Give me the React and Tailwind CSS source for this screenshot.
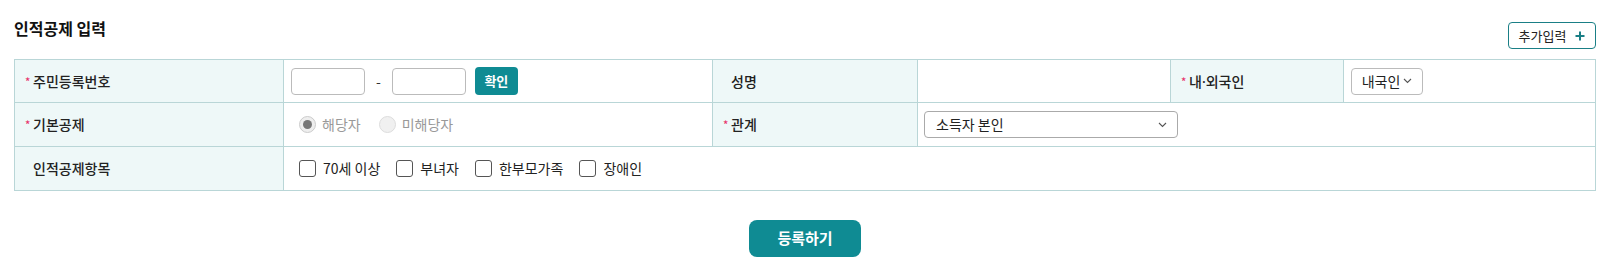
import React, { useState } from 'react'

const font = { fontFamily: '"Noto Sans CJK KR", "Noto Sans", sans-serif' }

function Label ({ children, required }) {
  return (
    <th className="border border-[#b9d6d7] bg-[#eef8f8] px-[10px] text-left text-[14px] font-medium text-[#222]">
      <span className="flex items-center">
        {required ? <span className="mr-[1px] w-[7px] text-[11px] text-[#e8336b]">*</span> : <span className="mr-[1px] w-[7px]" />}
        <span>{children}</span>
      </span>
    </th>
  )
}

function Chevron ({ className }) {
  return (
    <svg className={className} width="9" height="6" viewBox="0 0 9 6" fill="none">
      <path d="M1 1l3.5 3.5L8 1" stroke="#555" strokeWidth="1.1" />
    </svg>
  )
}

function Check ({ label }) {
  const [on, setOn] = useState(false)
  return (
    <label className="mr-[16px] flex cursor-pointer items-center gap-[7px] text-[14px] text-[#222]">
      <span
        onClick={() => setOn(!on)}
        className={'flex h-[17px] w-[17px] items-center justify-center rounded-[3px] border border-[#555] ' + (on ? 'bg-[#0f8b93]' : 'bg-white')}
      />
      {label}
    </label>
  )
}

export default function App () {
  return (
    <div className="bg-white px-[14px] pb-[16px]" style={font}>
      <div className="mb-[10px] flex items-start justify-between">
        <h2 className="mt-[17px] text-[16px] leading-[22px] font-bold text-[#111]">인적공제 입력</h2>
        <button className="mt-[22px] flex h-[27px] w-[88px] items-center justify-center gap-[9px] rounded-[4px] border border-[#1a7f86] text-[13px] text-[#222]">
          추가입력
          <svg width="10" height="10" viewBox="0 0 10 10"><path d="M5 0.5v9M0.5 5h9" stroke="#1a7f86" strokeWidth="2" /></svg>
        </button>
      </div>

      <table className="w-full table-fixed border-collapse">
        <colgroup>
          <col className="w-[269px]" />
          <col className="w-[429px]" />
          <col className="w-[205px]" />
          <col className="w-[253px]" />
          <col className="w-[173px]" />
          <col />
        </colgroup>
        <tbody>
          <tr className="h-[43px]">
            <Label required>주민등록번호</Label>
            <td className="border border-[#b9d6d7] px-[7px]">
              <div className="flex items-center">
                <input className="h-[27px] w-[74px] rounded-[4px] border border-[#bbb]" />
                <span className="mx-[11px] text-[14px] text-[#333]">-</span>
                <input className="h-[27px] w-[74px] rounded-[4px] border border-[#bbb]" />
                <button className="ml-[9px] h-[28px] w-[43px] rounded-[4px] bg-[#0f8b93] text-[13px] font-bold text-white">확인</button>
              </div>
            </td>
            <Label>성명</Label>
            <td className="border border-[#b9d6d7]" />
            <Label required>내<span style={{ fontFamily: '"Noto Sans", sans-serif' }}>·</span>외국인</Label>
            <td className="border border-[#b9d6d7] px-[7px]">
              <div className="flex h-[27px] w-[72px] items-center justify-center gap-[3px] rounded-[4px] border border-[#bbb] text-[14px] text-[#222]">
                내국인 <Chevron />
              </div>
            </td>
          </tr>
          <tr className="h-[44px]">
            <Label required>기본공제</Label>
            <td className="border border-[#b9d6d7] px-[15px]">
              <div className="flex items-center text-[14px] text-[#999]">
                <span className="flex h-[17px] w-[17px] items-center justify-center rounded-full border border-[#ccc] bg-[#eee]">
                  <span className="h-[9px] w-[9px] rounded-full bg-[#777]" />
                </span>
                <span className="ml-[6px] mr-[18px]">해당자</span>
                <span className="h-[17px] w-[17px] rounded-full border border-[#ddd] bg-[#f0f0f0]" />
                <span className="ml-[6px]">미해당자</span>
              </div>
            </td>
            <Label required>관계</Label>
            <td colSpan={3} className="border border-[#b9d6d7] px-[6px]">
              <div className="flex h-[27px] w-[254px] items-center justify-between rounded-[4px] border border-[#aaa] pl-[11px] pr-[10px] text-[14px] text-[#222]">
                소득자 본인 <Chevron />
              </div>
            </td>
          </tr>
          <tr className="h-[44px]">
            <Label>인적공제항목</Label>
            <td colSpan={5} className="border border-[#b9d6d7] px-[15px]">
              <div className="flex items-center">
                <Check label="70세 이상" />
                <Check label="부녀자" />
                <Check label="한부모가족" />
                <Check label="장애인" />
              </div>
            </td>
          </tr>
        </tbody>
      </table>

      <div className="mt-[29px] flex justify-center">
        <button className="h-[37px] w-[112px] rounded-[8px] bg-[#0f8b93] text-[15px] font-bold text-white">등록하기</button>
      </div>
    </div>
  )
}
